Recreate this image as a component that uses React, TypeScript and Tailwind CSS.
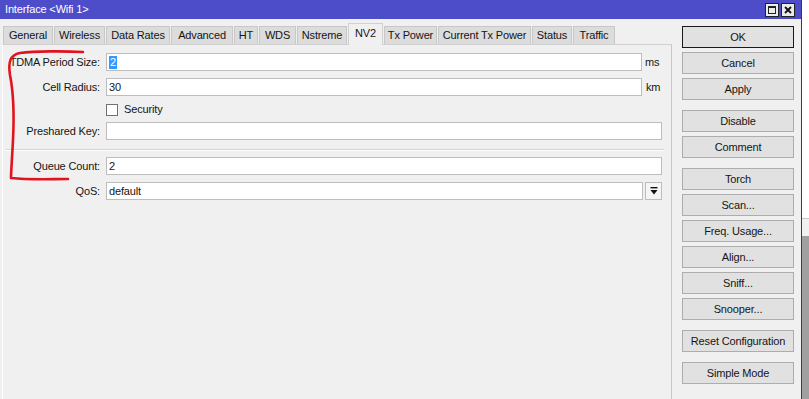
import React from "react";

const tabs: { label: string; w: number; active?: boolean }[] = [
  { label: "General", w: 50 },
  { label: "Wireless", w: 51 },
  { label: "Data Rates", w: 64 },
  { label: "Advanced", w: 62 },
  { label: "HT", w: 24 },
  { label: "WDS", w: 37 },
  { label: "Nstreme", w: 50 },
  { label: "NV2", w: 35, active: true },
  { label: "Tx Power", w: 53 },
  { label: "Current Tx Power", w: 93 },
  { label: "Status", w: 40 },
  { label: "Traffic", w: 42 },
];

function Btn({ children, def }: { children: React.ReactNode; def?: boolean }) {
  return (
    <div
      className={
        "h-[22px] w-[112px] flex items-center justify-center bg-[#e1e1e1] border " +
        (def ? "border-[#1a1a1a]" : "border-[#adadad]")
      }
    >
      {children}
    </div>
  );
}

function Label({ children }: { children: React.ReactNode }) {
  return <div className="w-[97px] text-right shrink-0 whitespace-nowrap">{children}</div>;
}

export default function App() {
  return (
    <div className="relative w-[809px] h-[399px] overflow-hidden bg-white flex font-['Liberation_Sans',Arial,sans-serif] text-[11px] tracking-[-0.15px] text-[#151515] leading-none">
      {/* window */}
      <div className="w-[802px] h-full flex flex-col border-r border-[#3c3c3c] shrink-0">
        {/* title bar */}
        <div className="h-[19px] bg-[#4d4dca] flex items-center justify-between shrink-0">
          <div className="pl-[5px] text-white text-[11px]">Interface &lt;Wifi 1&gt;</div>
          <div className="flex gap-[2px] mr-[6px]">
            <div className="w-[14px] h-[14px] bg-[#ececec] border border-[#222] flex items-center justify-center">
              <div className="w-[8px] h-[8px] border border-[#222] border-t-2" />
            </div>
            <div className="w-[14px] h-[14px] bg-[#ececec] border border-[#222] flex items-center justify-center">
              <svg width="8" height="8" viewBox="0 0 8 8">
                <path d="M1 1 L7 7 M7 1 L1 7" stroke="#111" strokeWidth="1.8" />
              </svg>
            </div>
          </div>
        </div>
        {/* body */}
        <div className="flex-1 bg-[#f0f0f0] flex">
          {/* left column */}
          <div className="w-[672px] pl-[2px] flex flex-col shrink-0">
            <div className="h-[25px] pl-[1px] flex items-end gap-[1px] shrink-0">
              {tabs.map((t) =>
                t.active ? (
                  <div
                    key={t.label}
                    style={{ width: t.w }}
                    className="relative h-[22px] mb-[-1px] bg-[#f0f0f0] border border-b-0 border-[#d0d0d0] flex items-center justify-center pb-[2px] z-10"
                  >
                    {t.label}
                  </div>
                ) : (
                  <div
                    key={t.label}
                    style={{ width: t.w }}
                    className="h-[18px] bg-[#dcdcdc] border border-b-0 border-[#c8c8c8] flex items-center justify-center"
                  >
                    {t.label}
                  </div>
                )
              )}
            </div>
            {/* panel */}
            <div className="flex-1 border-t border-t-[#d0d0d0] border-l border-l-white border-r border-r-[#c8c8c8] pt-[8px]">
              {/* TDMA */}
              <div className="h-[18px] flex items-center">
                <Label>TDMA Period Size:</Label>
                <div className="ml-[6px] w-[536px] h-[18px] bg-white border border-[#bdbdbd] flex items-center pl-[2px]">
                  <span className="bg-[#3399ff] text-white px-[1px] h-[13px] flex items-center">2</span>
                </div>
                <div className="ml-[3px]">ms</div>
              </div>
              {/* Cell radius */}
              <div className="h-[18px] mt-[7px] flex items-center">
                <Label>Cell Radius:</Label>
                <div className="ml-[6px] w-[536px] h-[18px] bg-white border border-[#bdbdbd] flex items-center pl-[2px]">
                  30
                </div>
                <div className="ml-[4px]">km</div>
              </div>
              {/* Security */}
              <div className="h-[13px] mt-[7px] flex items-center">
                <div className="w-[97px] shrink-0" />
                <div className="ml-[6px] w-[12px] h-[12px] bg-white border border-[#707070]" />
                <div className="ml-[6px]">Security</div>
              </div>
              {/* Preshared */}
              <div className="h-[18px] mt-[6px] flex items-center">
                <Label>Preshared Key:</Label>
                <div className="ml-[6px] w-[556px] h-[18px] bg-white border border-[#bdbdbd]" />
              </div>
              {/* separator */}
              <div className="mt-[9px] ml-[3px] mr-[7px] h-[2px] border-t border-t-[#d5d5d5] border-b border-b-white" />
              {/* Queue count */}
              <div className="h-[18px] mt-[6px] flex items-center">
                <Label>Queue Count:</Label>
                <div className="ml-[6px] w-[556px] h-[18px] bg-white border border-[#bdbdbd] flex items-center pl-[2px]">
                  2
                </div>
              </div>
              {/* QoS */}
              <div className="h-[18px] mt-[7px] flex items-center">
                <Label>QoS:</Label>
                <div className="ml-[6px] w-[537px] h-[18px] bg-white border border-[#bdbdbd] flex items-center pl-[2px]">
                  default
                </div>
                <div className="ml-[2px] w-[17px] h-[18px] bg-[#f5f5f5] border border-[#bdbdbd] flex items-center justify-center">
                  <svg width="8" height="8" viewBox="0 0 8 8">
                    <rect x="0.5" y="0" width="7" height="1.4" fill="#111" />
                    <polygon points="0.5,3 7.5,3 4,7.5" fill="#111" />
                  </svg>
                </div>
              </div>
            </div>
          </div>
          {/* right buttons */}
          <div className="ml-[10px] pt-[7px] flex flex-col">
            <div className="flex flex-col gap-[4px]">
              <Btn def>OK</Btn>
              <Btn>Cancel</Btn>
              <Btn>Apply</Btn>
            </div>
            <div className="mt-[10px] flex flex-col gap-[4px]">
              <Btn>Disable</Btn>
              <Btn>Comment</Btn>
            </div>
            <div className="mt-[10px] flex flex-col gap-[4px]">
              <Btn>Torch</Btn>
              <Btn>Scan...</Btn>
              <Btn>Freq. Usage...</Btn>
              <Btn>Align...</Btn>
              <Btn>Sniff...</Btn>
              <Btn>Snooper...</Btn>
            </div>
            <div className="mt-[10px]">
              <Btn>Reset Configuration</Btn>
            </div>
            <div className="mt-[10px]">
              <Btn>Simple Mode</Btn>
            </div>
          </div>
        </div>
      </div>
      {/* outside strip */}
      <div className="flex-1 flex flex-col">
        <div className="h-[218px] bg-white" />
        <div className="h-[18px] bg-[#f0f0f0] border-t border-[#c8c8c8]" />
        <div className="flex-1 bg-[#a0a0a0]" />
      </div>
      {/* red annotation */}
      <svg className="absolute left-0 top-0 pointer-events-none" width="809" height="399">
        <path
          d="M83 52 C65 51 35 51 20 53 C10 55 8 62 10 75 C14 95 14 120 13 140 C12 160 11 172 11 178 C30 180 50 179 68 179"
          fill="none"
          stroke="#e0141e"
          strokeWidth="2.6"
          strokeLinecap="round"
          strokeLinejoin="round"
        />
      </svg>
    </div>
  );
}
